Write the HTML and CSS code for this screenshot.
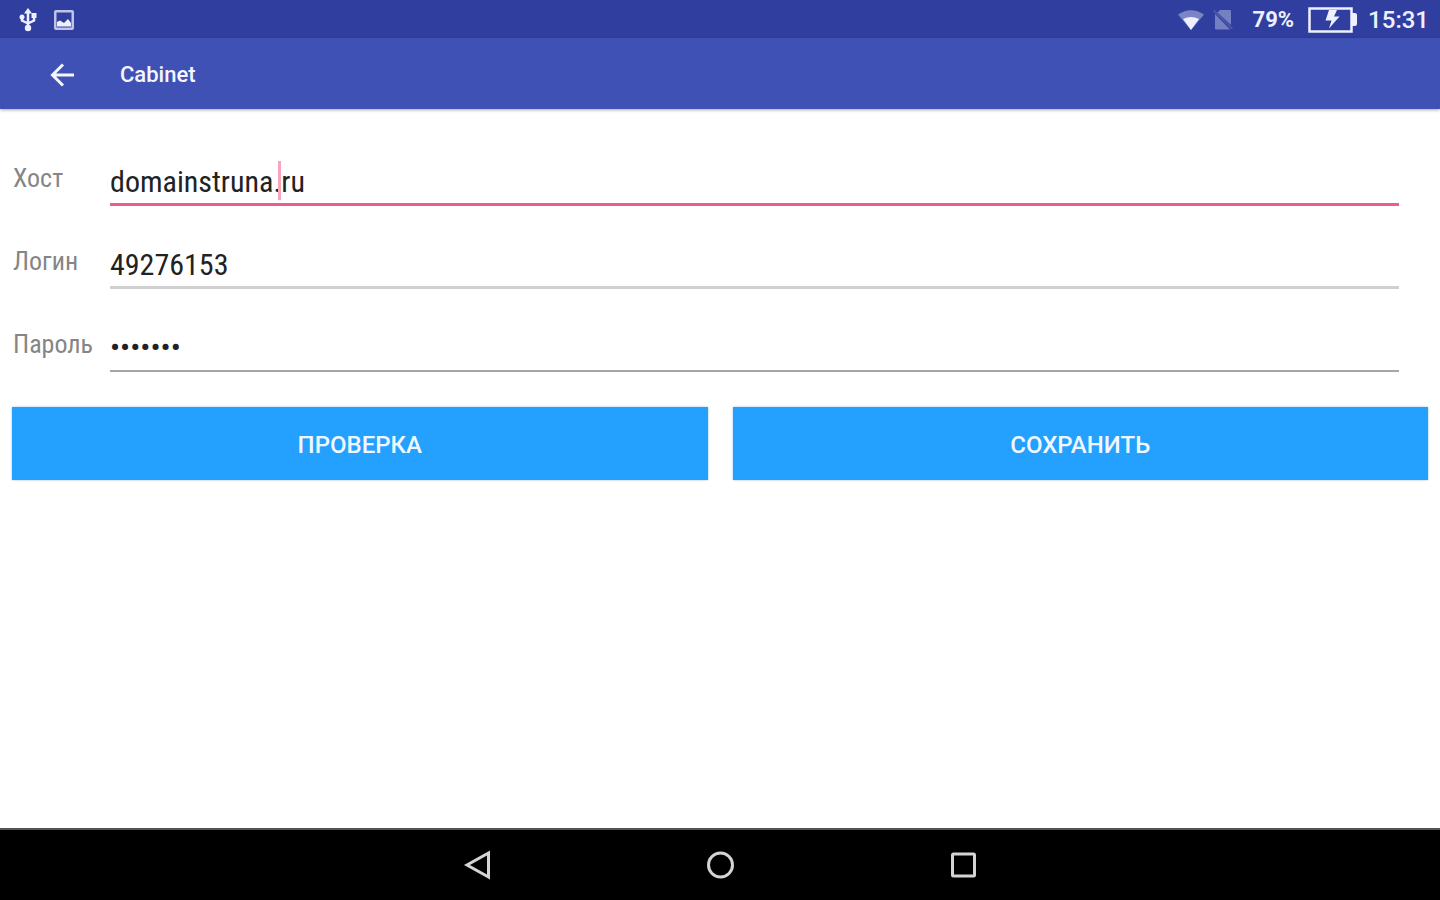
FILE: index.html
```html
<!DOCTYPE html>
<html lang="ru">
<head>
<meta charset="utf-8">
<meta name="viewport" content="width=device-width, initial-scale=1">
<title>Cabinet</title>
<link rel="stylesheet" href="styles.css">
</head>
<body>
<div class="status-bar">
  <div class="status-group">
    <svg class="icon-usb" width="20" height="24" viewBox="0 0 20 24" fill="none" stroke="currentColor" stroke-width="2.500">
      <path d="M10 4v15M10 15.500L4 12.500V9M10 15.500l6-3V8"/>
      <path d="M10 0l4 5.500h-8z" fill="currentColor" stroke="none"/>
      <circle cx="4" cy="9" r="2.500" fill="currentColor" stroke="none"/>
      <path d="M13.500 5h5v5h-5z" fill="currentColor" stroke="none"/>
      <circle cx="10" cy="20" r="3.200" fill="currentColor" stroke="none"/>
    </svg>
    <svg width="20" height="20" viewBox="0 0 20 20">
      <path fill="currentColor" fill-rule="evenodd" d="M2 0h16a2 2 0 0 1 2 2v16a2 2 0 0 1-2 2H2a2 2 0 0 1-2-2V2a2 2 0 0 1 2-2zM2.500 2.500v15h15v-15z" opacity=".75"/>
      <path fill="currentColor" d="M3 16.500V12l3-1.500 4 2.500 4-4 3 4v3.500z"/>
    </svg>
  </div>
  <div class="status-group">
    <svg width="26" height="20" viewBox="0 0 26 20" fill="currentColor">
      <path d="M0 4.500Q13-4 26 4.500L13 20z" opacity=".4"/>
      <path d="M5 9q8-4 16 0l-8 11z"/>
    </svg>
    <svg class="icon-nosim" width="20" height="20" viewBox="0 0 20 20">
      <path d="M7 0h10a1 1 0 0 1 1 1v14L4.500 2.500zM2 4l15 15.500H3a1 1 0 0 1-1-1z" fill="currentColor"/>
      <path d="M0 1.500l2-1.500 18 18-1.500 1.500z" fill="currentColor" opacity=".35"/>
    </svg>
    <span class="battery-level">79%</span>
    <svg class="icon-battery" width="49" height="26" viewBox="0 0 49 26">
      <path d="M1.500 1.500h42v23h-42z" fill="none" stroke="currentColor" stroke-width="2.500"/>
      <path d="M44 6h3a2 2 0 0 1 2 2v9a2 2 0 0 1-2 2h-3z" fill="currentColor"/>
      <path d="M21 3h8l-3 6.500h5.500L21 21.500l2.500-8h-6z" fill="currentColor"/>
    </svg>
    <span class="clock">15:31</span>
  </div>
</div>

<header class="app-bar">
  <button class="back" type="button" aria-label="Back">
    <svg width="24" height="24" viewBox="0 0 24 24" fill="none" stroke="currentColor" stroke-width="3"><path d="M24 12H3M13 1.500L2.500 12 13 22.500"/></svg>
  </button>
  <h1 class="title">Cabinet</h1>
</header>

<main class="content">
  <form class="form">
    <div class="row">
      <label class="label" for="host">Хост</label>
      <div class="field field-active">
        <input class="input" id="host" type="text" value="domainstruna.ru">
        <span class="caret"></span>
      </div>
    </div>
    <div class="row">
      <label class="label" for="login">Логин</label>
      <div class="field field-light">
        <input class="input" id="login" type="text" value="49276153">
      </div>
    </div>
    <div class="row">
      <label class="label" for="password">Пароль</label>
      <div class="field">
        <input class="input" id="password" type="password" value="1234567">
      </div>
    </div>
    <div class="actions">
      <button class="action" type="button">ПРОВЕРКА</button>
      <button class="action" type="button">СОХРАНИТЬ</button>
    </div>
  </form>
</main>

<nav class="nav-bar">
  <button class="nav-button" type="button" aria-label="Back">
    <svg width="28" height="30" viewBox="0 0 28 30" fill="none" stroke="currentColor" stroke-width="3"><path d="M25.500 3v24L4 15z"/></svg>
  </button>
  <button class="nav-button" type="button" aria-label="Home">
    <svg width="28" height="28" viewBox="0 0 28 28" fill="none" stroke="currentColor" stroke-width="3"><circle cx="14.500" cy="14" r="12"/></svg>
  </button>
  <button class="nav-button" type="button" aria-label="Recent apps">
    <svg width="28" height="28" viewBox="0 0 28 28" fill="none" stroke="currentColor" stroke-width="3"><rect x="3.500" y="3" width="22" height="22" rx="1"/></svg>
  </button>
</nav>
</body>
</html>
```
FILE: styles.css
```css
* { box-sizing: border-box; }

body {
  margin: 0;
  min-height: 100vh;
  display: flex;
  flex-direction: column;
  background: #fff;
  font-family: Roboto, "Noto Sans", sans-serif;
}

svg { display: block; }

button {
  margin: 0;
  padding: 0;
  border: 0;
  background: none;
  color: inherit;
  font-family: inherit;
}

.status-bar {
  display: flex;
  justify-content: space-between;
  height: 38px;
  padding: 1px 11px 0 18px;
  background: #303f9f;
  color: #eef0ff;
}

.status-group {
  display: flex;
  align-items: center;
}

.icon-usb { margin-right: 16px; }

.icon-nosim {
  margin: 0 20px 0 9px;
  color: #7580c2;
}

.battery-level,
.clock {
  font-size: 24px;
  font-weight: 500;
  line-height: 40px;
}

.battery-level {
  font-size: 22px;
  font-weight: 700;
}

.icon-battery { margin: 0 11px 0 14px; }

.app-bar {
  display: flex;
  align-items: center;
  height: 71px;
  padding: 2px 0 0 50px;
  background: #3f51b5;
  color: #f4f5ff;
  box-shadow: 0 1px 3px rgba(0, 0, 0, 0.35);
}

.back { margin-right: 46px; }

.title {
  margin: 0;
  font-size: 22px;
  font-weight: 500;
}

.content {
  flex: 1;
  padding: 40px 12px 0;
}

.row {
  display: grid;
  grid-template-columns: 98px 1fr;
  height: 83px;
  padding-right: 29px;
}

.label {
  padding-left: 1px;
  color: #858585;
  font-family: "Roboto Condensed", Roboto, "Noto Sans", sans-serif;
  font-size: 26px;
  line-height: 59px;
}

.field {
  position: relative;
  height: 57px;
  border-bottom: 2px solid #a6a6a6;
}

.field-active { border-bottom: 3px solid #ee5c8b; }

.field-light { border-bottom: 3px solid #d0d0d0; }

.input {
  width: 100%;
  height: 54px;
  padding: 11px 0 0;
  border: 0;
  outline: 0;
  background: none;
  color: #222;
  font-family: "Roboto Condensed", Roboto, "Noto Sans", sans-serif;
  font-size: 30px;
}

.caret {
  position: absolute;
  top: 12px;
  left: 168px;
  width: 3px;
  height: 39px;
  background: #f8a4bf;
}

.actions {
  display: grid;
  grid-template-columns: 1fr 1fr;
  gap: 25px;
  padding-top: 9px;
}

.action {
  height: 73px;
  padding-top: 2px;
  background: #24a0ff;
  color: #f0f8ff;
  font-size: 24px;
  font-weight: 500;
  box-shadow: 0 0 2px #8fbfe8;
}

.nav-bar {
  display: flex;
  justify-content: center;
  gap: 215px;
  height: 72px;
  border-top: 2px solid #555;
  background: #000;
  color: #d4d4d4;
}
```
